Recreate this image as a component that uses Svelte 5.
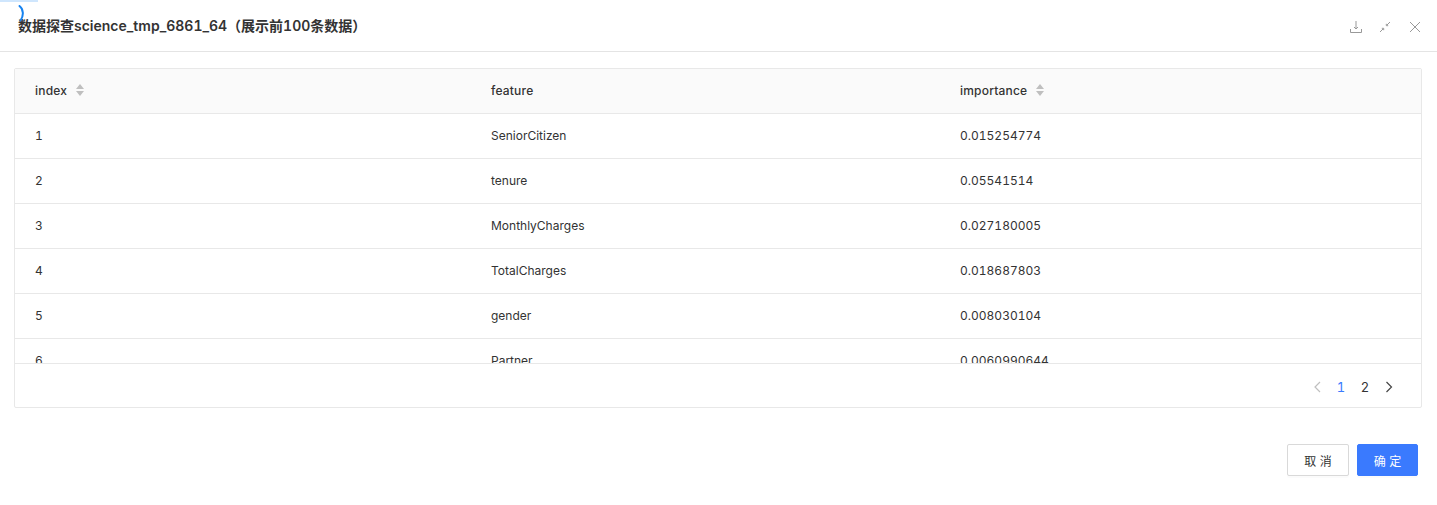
<script lang="ts">
  const rows = [
    { index: 1, feature: "SeniorCitizen", importance: "0.015254774" },
    { index: 2, feature: "tenure", importance: "0.05541514" },
    { index: 3, feature: "MonthlyCharges", importance: "0.027180005" },
    { index: 4, feature: "TotalCharges", importance: "0.018687803" },
    { index: 5, feature: "gender", importance: "0.008030104" },
    { index: 6, feature: "Partner", importance: "0.0060990644" },
  ];
</script>

{#snippet sorter()}
  <svg class="sorter" width="10" height="14" viewBox="0 0 10 14">
    <path d="M5 1 L9 6 H1 Z M5 13 L9 8 H1 Z" fill="#bfbfbf" />
  </svg>
{/snippet}

<div class="modal">
  <div class="glitch-bar"></div>
  <svg class="glitch-arc" width="8" height="17" viewBox="0 0 8 17">
    <path d="M1.5 1 C5.5 4 6 11 2.5 15.5" fill="none" stroke="#1683f0" stroke-width="2" stroke-linecap="round" />
  </svg>

  <header class="head">
    <h2>数据探查science_tmp_6861_64（展示前100条数据）</h2>
    <div class="tools">
      <svg width="14" height="14" viewBox="0 0 14 14" fill="none" stroke="#999" stroke-width="1">
        <path d="M7 1 V9 M5 7 L7 9 L9 7 M1.5 9 V12.5 H12.5 V9" />
      </svg>
      <svg width="14" height="14" viewBox="0 0 14 14" fill="none" stroke="#999" stroke-width="1">
        <path d="M12 2 L8.8 5.2 M8.3 3.8 V5.7 H10.2 M2 12 L5.2 8.8 M3.8 8.3 H5.7 V10.2" />
      </svg>
      <svg class="close" width="14" height="14" viewBox="0 0 14 14" fill="none" stroke="#999" stroke-width="1">
        <path d="M2 2 L12 12 M12 2 L2 12" />
      </svg>
    </div>
  </header>

  <section class="body">
    <div class="card">
      <div class="scroll">
        <div class="row th">
          <div class="cell">index {@render sorter()}</div>
          <div class="cell">feature</div>
          <div class="cell">importance {@render sorter()}</div>
        </div>
        {#each rows as r (r.index)}
          <div class="row">
            <div class="cell">{r.index}</div>
            <div class="cell">{r.feature}</div>
            <div class="cell">{r.importance}</div>
          </div>
        {/each}
      </div>
      <div class="pager">
        <span class="page">
          <svg width="10" height="12" viewBox="0 0 10 12" fill="none" stroke="#bfbfbf" stroke-width="1.2"><path d="M8 1 L3 6 L8 11" /></svg>
        </span>
        <span class="page on">1</span>
        <span class="page">2</span>
        <span class="page">
          <svg width="10" height="12" viewBox="0 0 10 12" fill="none" stroke="#444" stroke-width="1.2"><path d="M2.5 1 L7.5 6 L2.5 11" /></svg>
        </span>
      </div>
    </div>
  </section>

  <footer class="foot">
    <button class="btn">取 消</button>
    <button class="btn primary">确 定</button>
  </footer>
</div>

<style>
  :global(body) {
    background: #fff;
  }
  .modal {
    position: relative;
    height: 505px;
    overflow: hidden;
    background: #fff;
    color: #333;
    font-family: Inter, "Noto Sans CJK SC", sans-serif;
    font-size: 12px;
    font-variant-numeric: tabular-nums;
  }
  .glitch-bar {
    position: absolute;
    left: 0;
    top: 0;
    width: 38px;
    height: 2px;
    background: #cfe6fd;
  }
  .glitch-arc {
    position: absolute;
    left: 18px;
    top: 5px;
  }
  .head {
    height: 51px;
    border-bottom: 1px solid #e4e4e4;
    display: flex;
    align-items: center;
    justify-content: space-between;
    padding: 0 15px 0 18px;
  }
  h2 {
    margin: 0 0 2px;
    font-size: 14px;
    font-weight: 600;
    color: #333;
  }
  .tools {
    display: flex;
    gap: 15px;
    margin: 3px 0 0;
  }
  .close {
    margin-left: 1px;
  }
  .body {
    padding: 16px 15px 0 14px;
  }
  .card {
    border: 1px solid #e8e8e8;
    border-radius: 2px;
    height: 338px;
    display: flex;
    flex-direction: column;
  }
  .scroll {
    height: 294px;
    overflow: hidden;
    border-bottom: 1px solid #e8e8e8;
  }
  .row {
    display: grid;
    grid-template-columns: 456px 469px 1fr;
    height: 44px;
    border-bottom: 1px solid #e8e8e8;
    align-items: center;
  }
  .row.th {
    background: #fafafa;
    font-weight: 500;
    letter-spacing: 0.2px;
  }
  .cell {
    padding: 0 0 2px 20px;
    display: flex;
    align-items: center;
    gap: 8px;
  }
  .pager {
    flex: 1;
    display: flex;
    justify-content: flex-end;
    align-items: center;
    padding: 3px 20px 0 0;
    font-size: 13px;
  }
  .page {
    width: 24px;
    display: flex;
    justify-content: center;
  }
  .page.on {
    color: #3a7afe;
  }
  .foot {
    display: flex;
    justify-content: flex-end;
    gap: 8px;
    padding: 36px 19px 0 0;
  }
  .btn {
    width: 62px;
    height: 32px;
    border: 1px solid #d9d9d9;
    border-radius: 2px;
    background: #fff;
    color: #333;
    font-family: inherit;
    font-size: 12px;
    box-shadow: 0 2px 0 rgba(0, 0, 0, 0.015);
  }
  .btn.primary {
    width: 61px;
    background: #3a7afe;
    border-color: #3a7afe;
    color: #fff;
  }
</style>
